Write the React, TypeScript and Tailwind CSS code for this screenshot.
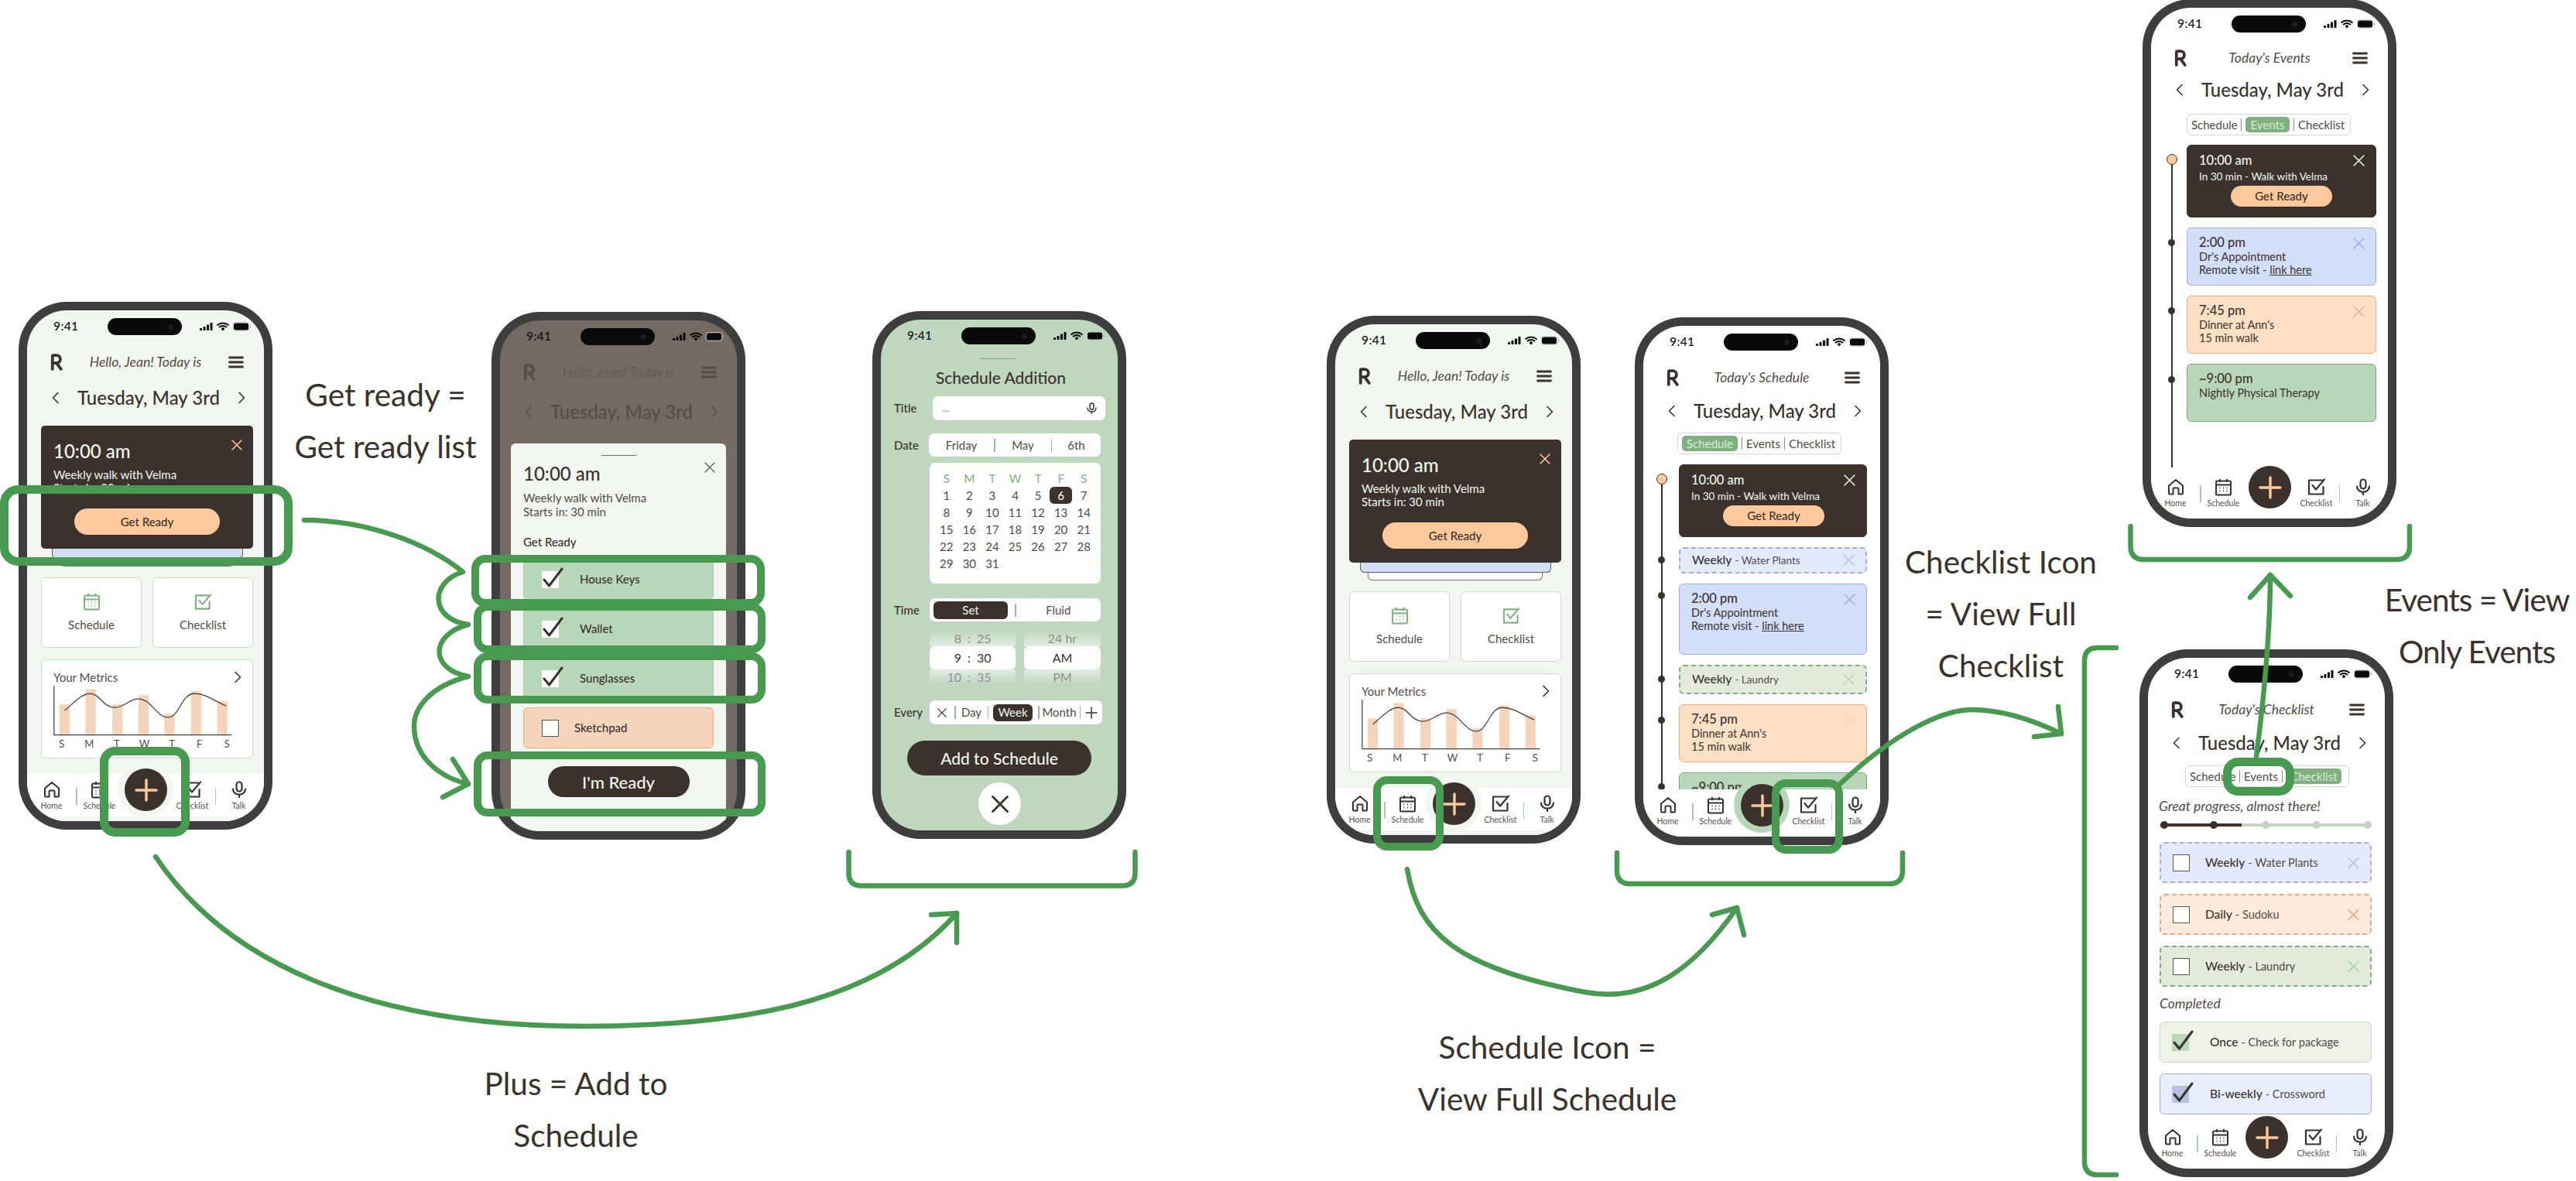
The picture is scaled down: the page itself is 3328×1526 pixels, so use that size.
import React from 'react'

const ink = '#3b312d'

const XIcon = ({ size = 14, color = ink, width = 1.5 }: { size?: number; color?: string; width?: number }) => (
    <svg width={size} height={size} viewBox="0 0 14 14" fill="none" stroke={color} strokeWidth={width} strokeLinecap="round">
        <path d="M1 1L13 13M13 1L1 13" />
    </svg>
)

const Chevron = ({ right = false }: { right?: boolean }) => (
    <svg width="10" height="16" viewBox="0 0 10 16" fill="none" stroke={ink} strokeWidth="1.6" strokeLinecap="round" strokeLinejoin="round">
        <path d={right ? 'M2 1.5L8.5 8L2 14.5' : 'M8 1.5L1.5 8L8 14.5'} />
    </svg>
)

const Logo = () => (
    <svg width="16" height="22" viewBox="0 0 15 21" fill="none" stroke={ink} strokeWidth="3.6" strokeLinecap="round" strokeLinejoin="round">
        <path d="M2.5 19V3.5Q2.5 2 4 2H7.5A4.5 4.5 0 0 1 7.5 11.5H3M7.5 11.5L13 19" />
    </svg>
)

const Burger = () => (
    <svg width="20" height="16" viewBox="0 0 20 16" fill="none" stroke={ink} strokeWidth="2.8" strokeLinecap="round">
        <path d="M1.5 2H18.5M1.5 8H18.5M1.5 14H18.5" />
    </svg>
)

const StatusIcons = () => (
    <svg width="66" height="12" viewBox="0 0 66 12" fill="#0a0a0a">
        <rect x="0" y="8" width="3" height="3" rx=".8" />
        <rect x="4.500" y="6" width="3" height="5" rx=".8" />
        <rect x="9" y="3.500" width="3" height="7.500" rx=".8" />
        <rect x="13.500" y="1" width="3" height="10" rx=".8" />
        <path d="M22.500 4.500C27 .5 33 .5 37.500 4.500M25 7C28 4.500 32 4.500 35 7" fill="none" stroke="#0a0a0a" strokeWidth="2" />
        <path d="M27.500 9L30 6.800L32.500 9L30 11.500Z" />
        <rect x="44" y="1.500" width="19" height="9" rx="2.500" />
        <rect x="43" y=".5" width="21" height="11" rx="3.500" fill="none" stroke="#c9c9c9" strokeWidth=".8" />
        <rect x="64.800" y="4.500" width="1.200" height="3" rx=".6" fill="#9a9a9a" />
    </svg>
)

const HomeIcon = () => (
    <svg width="22" height="22" viewBox="0 0 22 22" fill="none" stroke={ink} strokeWidth="2" strokeLinejoin="round">
        <path d="M2 9.500L11 2L20 9.500V19.500Q20 20.500 19 20.500H14.500V13.500Q14.500 12.500 13.500 12.500H8.500Q7.500 12.500 7.500 13.500V20.500H3Q2 20.500 2 19.500Z" />
    </svg>
)

const CalIcon = ({ color = ink, size = 23 }: { color?: string; size?: number }) => (
    <svg width={size} height={size} viewBox="0 0 22 23" fill="none" stroke={color} strokeWidth="2">
        <rect x="1.500" y="3.500" width="19" height="18" rx="1.500" />
        <path d="M1.500 8.500H20.500M6.500 1V5M15.500 1V5" />
        <path d="M6 12.500H7M10.500 12.500H11.500M15 12.500H16M6 16.500H7M10.500 16.500H11.500M15 16.500H16" strokeWidth="2" />
    </svg>
)

const CheckIcon = ({ color = ink, size = 24 }: { color?: string; size?: number }) => (
    <svg width={size} height={size} viewBox="0 0 24 24" fill="none" stroke={color} strokeWidth="2.200" strokeLinejoin="round" strokeLinecap="round">
        <path d="M20.500 12V21.500H2V3.500H19" />
        <path d="M6.500 10L11 15.500L22 2.500" />
    </svg>
)

const MicIcon = ({ color = ink, size = 22 }: { color?: string; size?: number }) => (
    <svg width={size} height={size} viewBox="0 0 22 22" fill="none" stroke={color} strokeWidth="2.200" strokeLinecap="round">
        <rect x="7.500" y="1.500" width="7" height="12" rx="3.500" />
        <path d="M3 10.500C3 20 19 20 19 10.500M11 17.500V21" />
    </svg>
)

const Phone = ({ className, screen, children }: { className: string; screen: string; children: React.ReactNode }) => (
    <div className={`absolute h-[682px] w-[328px] rounded-[62px] bg-[#3e3e3e] p-[11px] ${className}`}>
        <div className={`relative flex h-full flex-col overflow-hidden rounded-[51px] ${screen}`}>{children}</div>
    </div>
)

const StatusBar = () => (
    <div className="flex h-[42px] shrink-0 items-center pl-[34px]">
        <span className="w-[70px] text-[15.500px] font-medium tracking-wide text-[#111]">9:41</span>
        <div className="flex h-[22px] w-[96px] items-center justify-end rounded-full bg-[#0a0a0a] pr-[11px]">
            <div className="size-[7px] rounded-full bg-[#1d1d1f]" />
        </div>
        <div className="ml-[23px]">
            <StatusIcons />
        </div>
    </div>
)

const TopRow = ({ title, className = 'h-[50px]' }: { title: string; className?: string }) => (
    <div className={`flex shrink-0 items-center pl-[30px] pr-[26px] ${className}`}>
        <Logo />
        <span className="flex-1 text-center text-[17.500px] italic text-[#544b46]">{title}</span>
        <Burger />
    </div>
)

const DateRow = ({ className }: { className: string }) => (
    <div className={`flex shrink-0 items-center justify-between pl-[32px] pr-[24px] ${className}`}>
        <Chevron />
        <span className="text-[24px] font-medium text-[#3b312d]">Tuesday, May 3rd</span>
        <Chevron right />
    </div>
)

const NavItem = ({ icon, label, className }: { icon: React.ReactNode; label: string; className: string }) => (
    <div className={`flex flex-col items-center pt-[8px] ${className}`}>
        <div className="flex h-[24px] items-center">{icon}</div>
        <span className="mt-[3px] text-[10.500px] leading-[12px] text-[#5b524d]">{label}</span>
    </div>
)

const NavDivider = () => <div className="mt-[18px] h-[22px] w-[1.500px] shrink-0 bg-[#a9cdaa]" />

const BottomNav = ({ bar, halo }: { bar: string; halo: string }) => (
    <div className={`absolute inset-x-0 bottom-0 flex h-[61px] ${bar}`}>
        <NavItem className="w-[63px]" icon={<HomeIcon />} label="Home" />
        <NavDivider />
        <NavItem className="w-[58px]" icon={<CalIcon />} label="Schedule" />
        <div className="w-[62px]" />
        <NavItem className="w-[58px]" icon={<CheckIcon />} label="Checklist" />
        <NavDivider />
        <NavItem className="w-[59px]" icon={<MicIcon />} label="Talk" />
        <div className={`absolute left-[117px] top-[-16px] size-[72px] rounded-full ${halo}`} />
        <div className="absolute left-[126px] top-[-7px] flex size-[55px] items-center justify-center rounded-full bg-[#3b312d]">
            <svg width="30" height="30" viewBox="0 0 30 30" fill="none" stroke="#ffc99b" strokeWidth="3.400" strokeLinecap="round">
                <path d="M15 2V28M2 15H28" />
            </svg>
        </div>
    </div>
)

const HomeScreen = () => (
    <>
        <StatusBar />
        <TopRow title="Hello, Jean! Today is" />
        <DateRow className="h-[42px]" />
        <div className="ml-[18px] mt-[15px] w-[274px]">
            <div className="relative h-[159px] rounded-[5px] bg-[#3b312d] px-[16px] pt-[20px] text-[#f1f7f0]">
                <div className="text-[24px] font-medium leading-[26px]">10:00 am</div>
                <div className="mt-[9px] text-[15px] leading-[17px]">
                    <div>Weekly walk with Velma</div>
                    <div>Starts in: 30 min</div>
                </div>
                <div className="mx-auto mt-[18px] flex h-[34px] w-[188px] items-center justify-center rounded-full bg-[#ffc99b] text-[15px] font-medium text-[#3b312d]">
                    Get Ready
                </div>
                <div className="absolute right-[14px] top-[18px]">
                    <XIcon color="#ffc99b" />
                </div>
            </div>
            <div className="ml-[14px] h-[13px] w-[247px] rounded-b-[6px] border border-t-0 border-[#5c5654] bg-[#d3def8]" />
            <div className="ml-[24px] h-[10px] w-[226px] rounded-b-[6px] border border-t-0 border-[#7a7472] bg-white" />
            <div className="mt-[14px] flex justify-between">
                <div className="flex h-[91px] w-[130px] flex-col items-center rounded-[6px] border-[1.500px] border-[#c9dfc8] bg-white pt-[19px]">
                    <CalIcon color="#7fb17f" />
                    <span className="mt-[7px] text-[15px] text-[#544b46]">Schedule</span>
                </div>
                <div className="flex h-[91px] w-[130px] flex-col items-center rounded-[6px] border-[1.500px] border-[#c9dfc8] bg-white pt-[19px]">
                    <CheckIcon color="#7fb17f" size={23} />
                    <span className="mt-[7px] text-[15px] text-[#544b46]">Checklist</span>
                </div>
            </div>
            <div className="mt-[15px] h-[128px] rounded-[6px] border-[1.500px] border-[#c9dfc8] bg-white">
                <div className="flex h-[32px] items-end justify-between pl-[15px] pr-[14px] text-[15px] leading-[20px] text-[#544b46]">
                    <span>Your Metrics</span>
                    <span className="pb-[2px]">
                        <Chevron right />
                    </span>
                </div>
                <svg width="271" height="66" viewBox="0 0 274 66" fill="none" className="mt-[1px]">
                    {[[23, 24], [57, 4], [92, 24], [126, 12], [160, 37], [195, 7], [229, 20]].map(([x, y]) => (
                        <rect key={x} x={x} y={y} width="13.500" height={64 - y} fill="#f4d5bc" />
                    ))}
                    <path d="M16 0V64H248" stroke="#4a4340" strokeWidth="1.300" />
                    <path d="M30 32C42 22 52 10 63 10C76 10 80 28 95 28C108 28 114 17 126 17C143 17 150 41 165 41C180 41 182 10 199 10C215 10 225 20 241 26" stroke="#4a4340" strokeWidth="1.300" />
                </svg>
                <div className="ml-[8px] mt-[1px] grid w-[249px] grid-cols-7 text-center text-[13px] leading-[16px] text-[#544b46]">
                    {['S', 'M', 'T', 'W', 'T', 'F', 'S'].map((d, i) => (
                        <span key={i}>{d}</span>
                    ))}
                </div>
            </div>
        </div>
        <BottomNav bar="bg-white border-b-[6px] border-[#f1f7f0]" halo="bg-[#f1f7f0]" />
    </>
)

const GetReadyItem = ({ label, done }: { label: string; done?: boolean }) => (
    <div className={`flex h-[53px] items-center rounded-[6px] border pl-[23px] text-[15px] font-medium text-[#3b312d] ${done ? 'border-[#a8ccaa] bg-[#b9d7b9]' : 'border-[#e7a97f] bg-[#f5d5bb]'}`}>
        {done ? (
            <div className="relative size-[22px] bg-white">
                <svg width="30" height="30" viewBox="0 0 30 30" fill="none" stroke={ink} strokeWidth="3" strokeLinecap="round" strokeLinejoin="round" className="absolute left-0 top-[-5px]">
                    <path d="M3 16L9.500 24L26 2" />
                </svg>
            </div>
        ) : (
            <div className="size-[22px] border border-[#5b524d] bg-white" />
        )}
        <span className={done ? 'ml-[27px]' : 'ml-[20px]'}>{label}</span>
    </div>
)

const EventCard = ({ tone, x, className, children }: { tone: string; x?: string; className: string; children: React.ReactNode }) => (
    <div className={`relative rounded-[6px] border-[1.500px] pl-[15px] ${tone} ${className}`}>
        {children}
        {x && (
            <div className="absolute right-[14px] top-[12px]">
                <XIcon size={15} color={x} />
            </div>
        )}
    </div>
)

const Dot = ({ className }: { className: string }) => <div className={`size-[9px] shrink-0 rounded-full bg-[#3b312d] ${className}`} />

const Seg = ({ active, className }: { active: 'schedule' | 'events' | 'checklist'; className: string }) => {
    const pill = 'rounded-[5px] bg-[#7fb17f] text-center text-[#dcebdc]'
    return (
        <div className={`flex h-[28px] w-[212px] items-center gap-[5px] rounded-[6px] border-[1.500px] border-[#c9dfc8] pl-[5px] text-[15px] leading-[20px] text-[#544b46] ${className}`}>
            <span className={active === 'schedule' ? `w-[72px] ${pill}` : 'w-[59px]'}>Schedule</span>
            <div className="h-[16px] w-[1px] bg-[#8a8a8a]" />
            <span className={active === 'events' ? `w-[57px] ${pill}` : 'w-[44px]'}>Events</span>
            <div className="h-[16px] w-[1px] bg-[#8a8a8a]" />
            <span className={active === 'checklist' ? `w-[71px] ${pill}` : ''}>Checklist</span>
        </div>
    )
}

const DarkEvent = ({ className }: { className: string }) => (
    <EventCard tone="h-[94px] border-[#3b312d] bg-[#3b312d] pt-[9px] text-[#f1f7f0]" x="#cfe3cf" className={className}>
        <div className="text-[16.500px] font-medium leading-[20px]">10:00 am</div>
        <div className="mt-[3px] text-[13.500px] leading-[17px]">In 30 min - Walk with Velma</div>
        <div className="ml-[41px] mt-[3px] flex h-[27px] w-[131px] items-center justify-center rounded-full bg-[#ffc99b] text-[15px] font-medium text-[#3b312d]">
            Get Ready
        </div>
    </EventCard>
)

const Appointment = ({ h, className }: { h: string; className: string }) => (
    <EventCard tone={`${h} border-[#a3ade8] bg-[#d3def8] pt-[8px] text-[#3b312d]`} x="#a8b3e6" className={className}>
        <div className="text-[16.500px] font-medium leading-[20px]">2:00 pm</div>
        <div className="text-[14.500px] leading-[17px]">Dr's Appointment</div>
        <div className="text-[14.500px] leading-[17px]">
            Remote visit - <span className="underline">link here</span>
        </div>
    </EventCard>
)

const Dinner = ({ x, className }: { x: string; className: string }) => (
    <EventCard tone="h-[75px] border-[#e8ae86] bg-[#ffe0c5] pt-[8px] text-[#3b312d]" x={x} className={className}>
        <div className="text-[16.500px] font-medium leading-[20px]">7:45 pm</div>
        <div className="text-[14.500px] leading-[17px]">Dinner at Ann's</div>
        <div className="text-[14.500px] leading-[17px]">15 min walk</div>
    </EventCard>
)

const Therapy = ({ className }: { className: string }) => (
    <EventCard tone="h-[75px] border-[#7fa87f] bg-[#b8d6b8] pt-[8px] text-[#3b312d]" className={className}>
        <div className="text-[16.500px] font-medium leading-[20px]">~9:00 pm</div>
        <div className="text-[14.500px] leading-[17px]">Nightly Physical Therapy</div>
    </EventCard>
)

const DashedEvent = ({ tone, x, title, sub, className }: { tone: string; x: string; title: string; sub: string; className: string }) => (
    <div className={`relative flex items-center rounded-[6px] border-2 border-dashed pl-[15px] text-[#3b312d] ${tone} ${className}`}>
        <span className="text-[15.500px] font-medium">{title}</span>
        <span className="ml-[4px] text-[13.500px] text-[#544b46]">- {sub}</span>
        <div className="absolute right-[14px] top-1/2 -translate-y-1/2">
            <XIcon size={15} color={x} />
        </div>
    </div>
)

const TaskRow = ({ tone, box, x, title, sub, done }: { tone: string; box?: string; x?: string; title: string; sub: string; done?: boolean }) => (
    <div className={`relative flex h-[53px] items-center rounded-[6px] pl-[15px] ${tone}`}>
        {done ? (
            <div className={`relative size-[22px] ${box}`}>
                <svg width="30" height="30" viewBox="0 0 30 30" fill="none" stroke={ink} strokeWidth="3" strokeLinecap="round" strokeLinejoin="round" className="absolute left-0 top-[-5px]">
                    <path d="M3 16L9.500 24L26 2" />
                </svg>
            </div>
        ) : (
            <div className="size-[22px] border-[1.500px] border-[#5b524d] bg-white" />
        )}
        <span className={`text-[15.500px] font-medium text-[#3b312d] ${done ? 'ml-[27px]' : 'ml-[20px]'}`}>{title}</span>
        <span className="ml-[4px] text-[14.500px] text-[#544b46]">- {sub}</span>
        {x && (
            <div className="absolute right-[14px] top-1/2 -translate-y-1/2">
                <XIcon size={15} color={x} />
            </div>
        )}
    </div>
)

const calendar = [
    [1, 2, 3, 4, 5, 6, 7],
    [8, 9, 10, 11, 12, 13, 14],
    [15, 16, 17, 18, 19, 20, 21],
    [22, 23, 24, 25, 26, 27, 28],
    [29, 30, 31],
]

const PickerDigits = ({ h, m, className }: { h: string; m: string; className: string }) => (
    <div className={`flex items-center ${className}`}>
        <span className="w-[41px] text-right">{h}</span>
        <span className="w-[20px] text-center">:</span>
        <span>{m}</span>
    </div>
)

const Vr = () => <div className="h-[17px] w-[1.500px] shrink-0 bg-[#8fbf92]" />

const ScheduleAddition = () => (
    <>
        <StatusBar />
        <div className="ml-[129px] mt-[8px] h-[1px] w-[45px] bg-[#7fa87f]" />
        <div className="ml-[4px] mt-[11px] text-center text-[21px] font-medium leading-[26px] text-[#3b312d]">Schedule Addition</div>
        <div className="ml-[17px] mt-[11px] flex h-[31px] items-center text-[15px] font-medium text-[#3b312d]">
            <span className="w-[50px]">Title</span>
            <div className="flex h-full w-[223px] items-center justify-between rounded-[7px] bg-white pl-[13px] pr-[10px] text-[#6b6b6b]">
                <span className="text-[12px]">...</span>
                <MicIcon size={15} />
            </div>
        </div>
        <div className="ml-[17px] mt-[17px] flex h-[30px] items-center text-[15px] font-medium text-[#3b312d]">
            <span className="w-[45px]">Date</span>
            <div className="flex h-full w-[222px] items-center rounded-[7px] bg-white font-normal text-[#544b46]">
                <span className="w-[84px] text-center">Friday</span>
                <Vr />
                <span className="w-[72px] text-center">May</span>
                <Vr />
                <span className="flex-1 text-center">6th</span>
            </div>
        </div>
        <div className="ml-[63px] mt-[8px] h-[156px] w-[221px] rounded-[7px] bg-white pl-[7px] pt-[9px] text-[15px] leading-[22px] text-[#544b46]">
            <div className="grid w-[207px] grid-cols-7 text-center text-[#7fb17f]">
                {['S', 'M', 'T', 'W', 'T', 'F', 'S'].map((d, i) => (
                    <span key={i}>{d}</span>
                ))}
            </div>
            <div className="grid w-[207px] grid-cols-7 text-center">
                {calendar.flat().map((n) => (
                    <span key={n} className={n === 6 ? 'rounded-[6px] bg-[#3b312d] text-white' : ''}>
                        {n}
                    </span>
                ))}
            </div>
        </div>
        <div className="ml-[17px] mt-[19px] flex h-[30px] items-center text-[15px] font-medium text-[#3b312d]">
            <span className="w-[46px]">Time</span>
            <div className="flex h-full w-[221px] items-center rounded-[7px] bg-white pl-[5px] font-normal text-[#544b46]">
                <span className="flex h-[23px] w-[96px] items-center justify-center rounded-[6px] bg-[#3b312d] text-[#f1f7f0]">Set</span>
                <div className="ml-[9px]">
                    <Vr />
                </div>
                <span className="flex-1 text-center">Fluid</span>
            </div>
        </div>
        <div className="ml-[63px] mt-[12px] flex w-[221px] justify-between text-[16px] text-[#3b312d]">
            <div className="flex h-[69px] w-[111px] flex-col">
                <PickerDigits h="8" m="25" className="h-[20px] bg-gradient-to-b from-[#bfd6bf] to-[#e3ece3] text-[#8d918a]" />
                <PickerDigits h="9" m="30" className="h-[30px] rounded-[6px] bg-white" />
                <PickerDigits h="10" m="35" className="h-[19px] bg-gradient-to-t from-[#bfd6bf] to-[#e3ece3] text-[#8d918a]" />
            </div>
            <div className="flex h-[69px] w-[99px] flex-col text-center">
                <span className="h-[20px] bg-gradient-to-b from-[#bfd6bf] to-[#e3ece3] leading-[20px] text-[#8d918a]">24 hr</span>
                <span className="h-[30px] rounded-[6px] bg-white leading-[30px]">AM</span>
                <span className="h-[19px] bg-gradient-to-t from-[#bfd6bf] to-[#e3ece3] leading-[19px] text-[#8d918a]">PM</span>
            </div>
        </div>
        <div className="ml-[17px] mt-[21px] flex h-[31px] items-center text-[15px] font-medium text-[#3b312d]">
            <span className="w-[46px]">Every</span>
            <div className="flex h-full w-[223px] items-center rounded-[7px] bg-white font-normal text-[#544b46]">
                <span className="flex w-[32px] justify-center">
                    <XIcon size={12} />
                </span>
                <Vr />
                <span className="w-[41px] text-center">Day</span>
                <Vr />
                <span className="ml-[6px] flex h-[22px] w-[51px] items-center justify-center rounded-[6px] bg-[#3b312d] text-[#f1f7f0]">Week</span>
                <span className="ml-[7px]">
                    <Vr />
                </span>
                <span className="w-[52px] text-center">Month</span>
                <Vr />
                <span className="flex flex-1 justify-center">
                    <svg width="16" height="16" viewBox="0 0 16 16" stroke={ink} strokeWidth="1.500" strokeLinecap="round">
                        <path d="M8 1V15M1 8H15" />
                    </svg>
                </span>
            </div>
        </div>
        <div className="mx-[34px] mt-[21px] flex h-[45px] w-[238px] items-center justify-center rounded-full bg-[#3b312d] text-[21px] font-medium text-[#f1f7f0]">
            Add to Schedule
        </div>
        <div className="ml-[126px] mt-[9px] flex size-[55px] items-center justify-center rounded-full bg-white">
            <XIcon size={22} width={1.800} />
        </div>
    </>
)

const Arrow = ({ d }: { d: string }) => <path d={d} fill="none" stroke="#479a50" strokeWidth="6.500" strokeLinecap="round" strokeLinejoin="round" />

const Box = ({ x, y, w, h, s = 10, r = 13 }: { x: number; y: number; w: number; h: number; s?: number; r?: number }) => (
    <rect x={x} y={y} width={w} height={h} rx={r} fill="none" stroke="#479a50" strokeWidth={s} />
)

const Label = ({ className, lines }: { className: string; lines: string[] }) => (
    <div className={`absolute whitespace-nowrap text-center text-[40.500px] leading-[67px] text-[#3b312d] ${className}`}>
        {lines.map((l) => (
            <div key={l}>{l}</div>
        ))}
    </div>
)

export default function App() {
    return (
        <div className="relative h-[1526px] w-[3328px] overflow-hidden bg-white font-['Lato',sans-serif]">
            <Phone className="left-[24px] top-[390px]" screen="bg-[#f1f7f0]">
                <HomeScreen />
            </Phone>

            <Phone className="left-[635px] top-[403px]" screen="bg-[#736a64]">
                <StatusBar />
                <div className="opacity-50">
                    <TopRow title="Hello, Jean! Today is" />
                    <DateRow className="h-[52px]" />
                </div>
                <div className="relative mx-[14px] mt-[15px] flex-1 rounded-t-[6px] bg-[#f1f7f0] px-[16px]">
                    <div className="mx-auto mt-[15px] h-[1px] w-[45px] bg-[#6b6b6b]" />
                    <div className="mt-[10px] flex items-start justify-between">
                        <span className="text-[24px] font-medium leading-[26px] text-[#3b312d]">10:00 am</span>
                        <div className="mr-[-2px] mt-[-2px]">
                            <XIcon color="#6b6b6b" />
                        </div>
                    </div>
                    <div className="mt-[10px] text-[15px] leading-[17.500px] text-[#544b46]">
                        <div>Weekly walk with Velma</div>
                        <div>Starts in: 30 min</div>
                    </div>
                    <div className="mt-[20px] text-[15px] font-medium leading-[20px] text-[#3b312d]">Get Ready</div>
                    <div className="mt-[12px] flex flex-col gap-[11px]">
                        <GetReadyItem label="House Keys" done />
                        <GetReadyItem label="Wallet" done />
                        <GetReadyItem label="Sunglasses" done />
                        <GetReadyItem label="Sketchpad" />
                    </div>
                    <div className="mx-auto mt-[23px] flex h-[40px] w-[183px] items-center justify-center rounded-full bg-[#3b312d] text-[22px] font-medium text-[#f1f7f0]">
                        I'm Ready
                    </div>
                </div>
            </Phone>

            <Phone className="left-[1127px] top-[402px]" screen="bg-[#bfd6bf]">
                <ScheduleAddition />
            </Phone>

            <Phone className="left-[1714px] top-[408px]" screen="bg-[#f1f7f0]">
                <HomeScreen />
            </Phone>

            <Phone className="left-[2112px] top-[410px]" screen="bg-white">
                <StatusBar />
                <TopRow title="Today's Schedule" />
                <DateRow className="h-[36px]" />
                <Seg active="schedule" className="ml-[44px] mt-[10px]" />
                <div className="relative mt-[13px] flex flex-col gap-[13px]">
                    <div className="absolute left-[22.500px] top-[19px] h-[420px] w-[2px] bg-[#3b312d]" />
                    <div className="absolute left-[17px] top-[12px] size-[14px] rounded-full border-[1.500px] border-[#3b312d] bg-[#ffc99b]" />
                    <div className="flex pl-[19px]">
                        <div className="size-[9px] shrink-0" />
                        <DarkEvent className="ml-[18px] w-[243px]" />
                    </div>
                    <div className="flex pl-[19px]">
                        <Dot className="mt-[12px]" />
                        <DashedEvent tone="border-[#a5a9e9] bg-[#e4eafd]" x="#b9c2ee" title="Weekly" sub="Water Plants" className="ml-[18px] h-[34px] w-[243px]" />
                    </div>
                    <div className="flex pl-[19px]">
                        <Dot className="mt-[11px]" />
                        <Appointment h="h-[92px]" className="ml-[18px] w-[243px]" />
                    </div>
                    <div className="flex pl-[19px]">
                        <Dot className="mt-[14px]" />
                        <DashedEvent tone="border-[#7fb17f] bg-[#e4ebdd]" x="#b3d8b5" title="Weekly" sub="Laundry" className="ml-[18px] h-[38px] w-[243px]" />
                    </div>
                    <div className="flex pl-[19px]">
                        <Dot className="mt-[16px]" />
                        <Dinner x="#f6d3b7" className="ml-[18px] w-[243px]" />
                    </div>
                    <div className="flex pl-[19px]">
                        <Dot className="mt-[14px]" />
                        <Therapy className="ml-[18px] w-[243px]" />
                    </div>
                </div>
                <BottomNav bar="bg-white" halo="bg-[#b8d6b8]" />
            </Phone>

            <Phone className="left-[2768px] top-[-1px]" screen="bg-white">
                <StatusBar />
                <TopRow title="Today's Events" className="h-[46px]" />
                <DateRow className="h-[36px]" />
                <Seg active="events" className="ml-[46px] mt-[13px]" />
                <div className="relative ml-[3px] mt-[12px] flex flex-col gap-[13px]">
                    <div className="absolute left-[22.500px] top-[19px] h-[398px] w-[2px] bg-[#3b312d]" />
                    <div className="absolute left-[17px] top-[12px] size-[14px] rounded-full border-[1.500px] border-[#3b312d] bg-[#ffc99b]" />
                    <div className="flex pl-[19px]">
                        <div className="size-[9px] shrink-0" />
                        <DarkEvent className="ml-[15px] w-[245px]" />
                    </div>
                    <div className="flex pl-[19px]">
                        <Dot className="mt-[15px]" />
                        <Appointment h="h-[75px]" className="ml-[15px] w-[245px]" />
                    </div>
                    <div className="flex pl-[19px]">
                        <Dot className="mt-[15px]" />
                        <Dinner x="#e8b796" className="ml-[15px] w-[245px]" />
                    </div>
                    <div className="flex pl-[19px]">
                        <Dot className="mt-[16px]" />
                        <Therapy className="ml-[15px] w-[245px]" />
                    </div>
                </div>
                <BottomNav bar="" halo="" />
            </Phone>

            <Phone className="left-[2764px] top-[839px]" screen="bg-white">
                <StatusBar />
                <TopRow title="Today's Checklist" />
                <DateRow className="h-[36px]" />
                <Seg active="checklist" className="ml-[48px] mt-[11px]" />
                <div className="ml-[14px] mt-[15px] text-[17.500px] italic leading-[20px] text-[#544b46]">Great progress, almost there!</div>
                <div className="relative ml-[16px] mt-[9px] flex h-[10px] w-[273px] items-center">
                    <div className="h-[4px] w-[105px] bg-[#3b312d]" />
                    <div className="h-[4px] flex-1 bg-[#c3d6c2]" />
                    <div className="absolute left-[0px] size-[10px] rounded-full bg-[#3b312d]" />
                    <div className="absolute left-[64px] size-[10px] rounded-full bg-[#3b312d]" />
                    <div className="absolute left-[131px] size-[10px] rounded-full bg-[#c3d6c2]" />
                    <div className="absolute left-[197px] size-[10px] rounded-full bg-[#c3d6c2]" />
                    <div className="absolute left-[263px] size-[10px] rounded-full bg-[#c3d6c2]" />
                </div>
                <div className="ml-[15px] mt-[17px] flex w-[274px] flex-col gap-[14px]">
                    <TaskRow tone="border-2 border-dashed border-[#a8aeec] bg-[#e4eafd]" x="#b9c2ee" title="Weekly" sub="Water Plants" />
                    <TaskRow tone="border-2 border-dashed border-[#eaaa80] bg-[#ffeadb]" x="#eaaa80" title="Daily" sub="Sudoku" />
                    <TaskRow tone="border-2 border-dashed border-[#7fb17f] bg-[#e4ebdd]" x="#a5d6aa" title="Weekly" sub="Laundry" />
                </div>
                <div className="ml-[15px] mt-[12px] text-[17.500px] italic leading-[20px] text-[#544b46]">Completed</div>
                <div className="ml-[15px] mt-[13px] flex w-[274px] flex-col gap-[14px]">
                    <TaskRow tone="border-[1.500px] border-[#c9dfc8] bg-[#eff2e9]" box="bg-[#b9d7b9]" title="Once" sub="Check for package" done />
                    <TaskRow tone="border-[1.500px] border-[#a3aee0] bg-[#e9eefc]" box="bg-[#b6c1e4]" title="Bi-weekly" sub="Crossword" done />
                </div>
                <BottomNav bar="" halo="" />
            </Phone>

            <Label className="left-[348px] top-[476px] w-[300px]" lines={['Get ready =', 'Get ready list']} />
            <Label className="left-[594px] top-[1366px] w-[300px]" lines={['Plus = Add to', 'Schedule']} />
            <Label className="left-[1829px] top-[1319px] w-[340px]" lines={['Schedule Icon =', 'View Full Schedule']} />
            <Label className="left-[2435px] top-[692px] w-[300px]" lines={['Checklist Icon', '= View Full', 'Checklist']} />
            <Label className="left-[3076px] top-[741px] w-[248px] tracking-[-1px]" lines={['Events = View', 'Only Events']} />

            <svg width="3328" height="1526" viewBox="0 0 3328 1526" className="pointer-events-none absolute inset-0">
                <Box x={5.5} y={632.5} w={367} h={93} s={11} r={18} />
                <Box x={134.5} y={970.5} w={105} h={105} s={11} r={14} />
                <Box x={614} y={722} w={369} h={57} />
                <Box x={617} y={784} w={367} h={55} />
                <Box x={617} y={848} w={367} h={56} />
                <Box x={617} y={976} w={367} h={74} />
                <Box x={1779} y={1008} w={81} h={86} />
                <Box x={2294} y={1012} w={82} h={86} />
                <Box x={2877.5} y={984.5} w={81} h={38} s={11} r={14} />

                <Arrow d="M1096.500 1101V1128Q1096.500 1144.500 1113 1144.500H1450Q1466.500 1144.500 1466.500 1128V1101" />
                <Arrow d="M2089 1102V1125Q2089 1142 2106 1142H2441Q2458 1142 2458 1125V1102" />
                <Arrow d="M2752.500 680V706Q2752.500 723 2770 723H3096Q3113 723 3113 706V680" />
                <Arrow d="M2734 837H2710Q2693 837 2693 854V1501Q2693 1518 2710 1518H2734" />

                <Arrow d="M393 672C470 672 550 700 598 739C555 752 555 800 605 807C555 820 555 865 605 874C555 887 535 915 535 938C535 980 570 1005 605 1013" />
                <Arrow d="M585 981L605 1013L572 1030" />
                <Arrow d="M201 1107C290 1240 470 1326 752 1326C950 1326 1130 1300 1236 1180" />
                <Arrow d="M1203 1182L1236 1180V1218" />
                <Arrow d="M1818 1123C1832 1205 1880 1250 2048 1282C2130 1297 2190 1250 2244 1173" />
                <Arrow d="M2212 1182L2244 1173L2253 1208" />
                <Arrow d="M2377 1013C2450 945 2510 917 2547 917C2590 917 2630 932 2663 948" />
                <Arrow d="M2659 913L2663 948L2628 952" />
                <Arrow d="M2915 978C2925 900 2933 820 2933 743" />
                <Arrow d="M2907 772L2933 743L2959 770" />
            </svg>
        </div>
    )
}
